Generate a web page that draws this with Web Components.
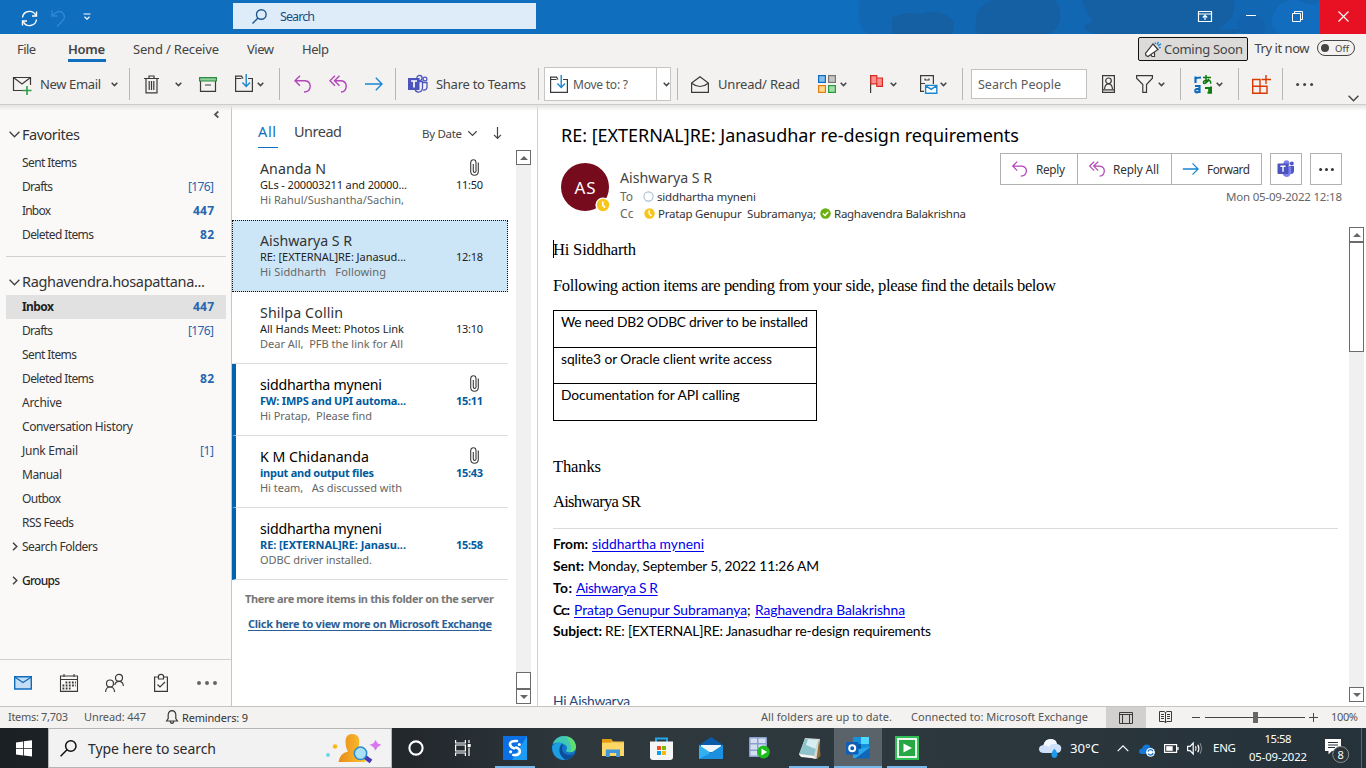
<!DOCTYPE html>
<html lang="en">
<head>
<meta charset="utf-8">
<title>Inbox - Outlook</title>
<style>
html,body{margin:0;height:100%;overflow:hidden}
body{font-family:"Noto Sans","Open Sans",sans-serif;color:#444}
</style>
</head>
<body>
<mail-app></mail-app>
<script>
/* Icon set: [width, height, svg body] */
const CH = 'stroke="#444" fill="none" stroke-width="1.5"';
const D = 'stroke="#3b3a39" fill="none" stroke-width="1.2"';
const W = 'stroke="#fff" fill="none" stroke-width="1.2"';
const P = 'stroke="#b146b8" fill="none" stroke-width="1.4"';
const B = 'stroke="#1b87d0" fill="none" stroke-width="1.4"';
const ICONS = {
 sync:[17,17,`<g stroke="#fff" fill="none" stroke-width="1.4"><path d="M1.5 7.5A7 7 0 0 1 14.8 5.5M15.5 9.5A7 7 0 0 1 2.2 11.5"/><path d="M15.5 1.5V6H11M1.5 15.5V11H6"/></g>`],
 undo:[15,17,`<g stroke="#2f86d6" fill="none" stroke-width="1.4"><path d="M1 .5V6H6.5M1 6L4 3.2Q8 0 11.5 2.8Q15.5 7 11.5 11L6 16.5"/></g>`],
 qat:[8,8,`<path d="M.5 1H7.5M1.5 3.8L4 6.2L6.5 3.8" ${W}/>`],
 search:[15,15,`<g stroke="#1c5a94" fill="none" stroke-width="1.4"><circle cx="9.3" cy="5.5" r="4.8"/><path d="M6 9L.5 14.5"/></g>`],
 ribbon:[14,11,`<path d="M.5 .5H13.5V10.5H.5ZM.5 3H13.5M7 9V4.5M4.8 6.5L7 4.4L9.2 6.5" ${W}/>`],
 min:[10,2,`<path d="M0 .5H10" stroke="#fff"/>`],
 restore:[11,11,`<path d="M.5 2.5H8.5V10.5H.5ZM2.5 2.5V.5H10.5V8.5H8.5" stroke="#fff" fill="none"/>`],
 close:[11,11,`<path d="M.5 .5L10.5 10.5M10.5 .5L.5 10.5" ${W}/>`],
 horn:[18,17,`<path d="M2 14.5L1.5 12.5L9 3L14 8.5L4 15.5L2 14.5ZM7 13.5L8 15.5H10.5V11.5" stroke="#3b3a39" stroke-width="1.2" fill="#fff"/><path d="M11 1.5L11.5 3M14.5 .8L13 3.5M17 2.8L14 4.7M16.8 6.5H14.8" ${B}/>`],
 chev:[7,5,`<path d="M.7 .8L3.5 3.6L6.3 .8" ${CH}/>`],
 chevL:[11,7,`<path d="M.6 .8L5.5 5.7L10.4 .8" stroke="#444" fill="none" stroke-width="1.4"/>`],
 newmail:[19,18,`<path d="M11 13.5H.5V.5H17.5V8" ${D}/><path d="M.8 .8L9 7L17.2 .8" ${D}/><path d="M14 9V18M9.5 13.5H18.5" stroke="#2f9e44" stroke-width="1.6"/>`],
 trash:[15,19,`<path d="M0 3.5H15M5 3.5V1H10V3.5M2 3.5V17.8H13V3.5M5.2 6V15M7.5 6V15M9.8 6V15" ${D}/>`],
 archive:[18,15,`<path d="M1.5 4V14.3H16.5V4M6 8H12" ${D}/><path d="M.6 .6H17.4V4H.6Z" fill="#8fd19e" stroke="#2b8a3e" stroke-width="1.2"/>`],
 folder:[18,18,`<path d="M6.5 4.5H.6V17.4H17.4V4.5H13M.6 4.5V2.2H6.5L8 4.5" ${D}/><path d="M11.2 0V12.5M7.4 8.6L11.2 12.5L15 8.6" ${B}/>`],
 reply:[17,18,`<path d="M6 .8L1 5.8L6 10.8M1 5.8H11Q16.2 6.3 16.2 11.3Q16 16.8 10 17" ${P}/>`],
 replyall:[18,18,`<path d="M6 .8L1 5.8L6 10.8M10.5 .8L5.5 5.8L10.5 10.8M5.5 5.8H12Q17.2 6.3 17.2 11.3Q17 16.8 12 17" ${P}/>`],
 fwd:[18,14,`<path d="M0 7H17M10.8 .8L17 7L10.8 13.2" ${B}/>`],
 teams:[20,18,`<circle cx="11.5" cy="3" r="2.6" fill="#e8e9f8" stroke="#4b53bc" stroke-width="1.3"/><circle cx="17" cy="4" r="1.9" fill="none" stroke="#4b53bc" stroke-width="1.2"/><path d="M8 6.5H14.5V13Q14 17.4 9.8 17Q7.5 16.5 7 14.5M14.5 7.5H19V12.5Q18.5 15.5 15 15" fill="none" stroke="#4b53bc" stroke-width="1.3"/><rect y="3" width="11.5" height="12" fill="#4b53bc"/><path d="M3 6H9M6 6V12.5" stroke="#fff" stroke-width="1.7"/>`],
 teamsc:[18,18,`<circle cx="9.5" cy="3.2" r="3" fill="#7b83eb"/><circle cx="14.8" cy="3.4" r="2" fill="#5059c9"/><path d="M12 6H17V11.5Q16.5 14.5 13 14Z" fill="#5059c9"/><path d="M6 6.5H14V12Q13.5 17 9.5 17Q6 16.5 5.5 13Z" fill="#7b83eb"/><rect x=".5" y="3.5" width="11" height="10.5" rx="1" fill="#4b53bc"/><path d="M3.4 6.3H8.6M6 6.3V11.8" stroke="#fff" stroke-width="1.4"/>`],
 openmail:[18,17,`<path d="M.6 7L9 .8L17.4 7V16.4H.6ZM.8 7.2Q9 13.8 17.2 7.2" ${D}/>`],
 cats:[18,18,`<g stroke-width="1.2"><rect x=".6" y=".6" width="6.8" height="6.8" fill="#83beec" stroke="#0f6cbd"/><rect x="10.6" y=".6" width="6.8" height="6.8" fill="#c8c6c4" stroke="#797775"/><rect x=".6" y="10.6" width="6.8" height="6.8" fill="#fcd98c" stroke="#e07c10"/><rect x="10.6" y="10.6" width="6.8" height="6.8" fill="#a1dda8" stroke="#2b9a3e"/></g>`],
 flag:[14,18,`<path d="M.6 0V18" stroke="#3b3a39" stroke-width="1.2"/><path d="M.8 .7H6.8V3H12.4V11.3H6.8V8.8H.8Z" fill="#ff8f8f" stroke="#d92b20" stroke-width="1.2"/><path d="M6.8 3V9" stroke="#d92b20"/>`],
 cabinet:[18,19,`<path d="M4 16.4H.6V.6H13.4V9M.6 8.5H5M5 3.5V5H9V3.5" ${D}/><path d="M5.6 10.4H16.8V18.2H5.6ZM5.8 10.8L11.2 14.4L16.5 10.8" stroke="#1b87d0" stroke-width="1.4" fill="#fff"/>`],
 person:[13,18,`<path d="M.6 .6H12.4V17.4H.6ZM.6 14.8H12.4" ${D}/><circle cx="6.5" cy="5.8" r="2.8" ${D}/><path d="M2.5 14Q3 8.8 6.5 8.8Q10 8.8 10.5 14" ${D}/>`],
 filter:[17,18,`<path d="M.6 .6H16.4V3.2L10.5 9.5V17.4H6.8V9.5L.6 3.2Z" ${D}/>`],
 translate:[19,19,`<g stroke="#0f6cbd" stroke-width="2.2" fill="none"><path d="M1.5 8V1.5M1.5 4Q2.5 2.5 7 2.5M1 11H5.5V18M5.5 14H2.5Q1 14.5 1.2 16Q1.5 17.6 3 17.4L5.5 16"/></g><g stroke="#107c10" stroke-width="1.5" fill="none"><path d="M9 2.6H17M12 0V8M15 4Q12 9 9.7 8.3Q8.6 6 12.5 4.9Q17.8 5 16.5 8.8"/><path d="M17 11.5V17.8H13.5M11 13H17M15.2 13V17" stroke-width="2"/></g>`],
 addin:[19,19,`<path d="M.7 4.5H8V18.3H.7ZM8 11.3H.7M8 11.3H15V18.3H8M14 0V9M9.5 4.5H19" fill="none" stroke="#d83b01" stroke-width="1.4"/>`],
 dots:[17,3,`<g fill="#444"><circle cx="1.6" cy="1.5" r="1.5"/><circle cx="8.6" cy="1.5" r="1.5"/><circle cx="15.6" cy="1.5" r="1.5"/></g>`],
 dotsS:[15,3,`<g fill="#333"><circle cx="1.6" cy="1.5" r="1.5"/><circle cx="7.5" cy="1.5" r="1.5"/><circle cx="13.4" cy="1.5" r="1.5"/></g>`],
 dotsN:[20,4,`<g fill="#666"><circle cx="2" cy="2" r="2"/><circle cx="10" cy="2" r="2"/><circle cx="18" cy="2" r="2"/></g>`],
 left:[5,7,`<path d="M4.3 .5L1 3.5L4.3 6.5" stroke="#555" stroke-width="1.8" fill="none"/>`],
 right:[6,9,`<path d="M1 .7L4.8 4.5L1 8.3" ${CH}/>`],
 down:[9,12,`<path d="M4.5 0V11M1 7.8L4.5 11.3L8 7.8" stroke="#444" fill="none" stroke-width="1.2"/>`],
 clip:[9,17,`<path d="M8.3 3.5V12.5Q8 16.3 4.5 16.3Q1 16.3 .7 12.5V3.5Q1 .7 3.4 .7Q6 .7 6 3.5V12Q5.9 13.4 4.6 13.4Q3.3 13.4 3.3 12V5" stroke="#3b3a39" fill="none" stroke-width="1.1"/>`],
 nmail:[18,14,`<path d="M.7 .7H17.3V13H.7Z" fill="#c3ddf5" stroke="#0f6cbd" stroke-width="1.4"/><path d="M1 1.2L9 6.5L17 1.2" fill="none" stroke="#0f6cbd" stroke-width="1.2"/>`],
 ncal:[18,18,`<path d="M.5 2H17.5V17.4H.5ZM.5 5.5H17.5M4 0V3M14 0V3" stroke="#3b3a39" fill="none" stroke-width="1.1"/><g stroke="#3b3a39" stroke-width="1.8" stroke-dasharray="1.8 1.4"><path d="M5.5 8.5H16M2.5 11.5H16M2.5 14.5H10.5"/></g>`],
 npeople:[19,18,`<g ${D}><circle cx="5" cy="9.5" r="3.5"/><circle cx="14" cy="3.8" r="3.5"/><path d="M.6 18Q.8 13 5 13Q9.3 13 9.6 18M9.8 11Q10.5 7.4 14 7.4Q18 7.4 18.4 12"/></g>`],
 nclip:[14,18,`<path d="M.6 3H4.5V1.5Q7 -.8 9.5 1.5V3H13.4V17.4H.6ZM4.5 3V5H9.5V3M3.5 10.5L6 13L11 8" ${D}/>`],
 bell:[12,14,`<path d="M.6 11H11.4L9.8 8.5V4.5Q9.3 .7 6 .6Q2.7 .7 2.2 4.5V8.5ZM4.3 11.3Q4.6 13.3 6 13.3Q7.4 13.3 7.7 11.3" ${D}/>`],
 view:[14,12,`<path d="M.5 .5H13.5V11.5H.5ZM.5 2.5H13.5M3.5 2.5V11.5M10.5 2.5V11.5" stroke="#3b3a39" fill="none"/>`],
 book:[13,12,`<path d="M6.5 1.5V12M.5 .5H5L6.5 1.5L8 .5H12.5V10.5H8L6.5 11.5L5 10.5H.5ZM2 3.5H5M2 5.5H5M2 7.5H5M8 3.5H11M8 5.5H11M8 7.5H11" stroke="#3b3a39" fill="none"/>`],
 win:[17,17,`<path d="M0 2.4L7.2 1.4V8H0ZM8 1.3L16 .2V8H8ZM0 8.8H7.2V15.5L0 14.5ZM8 8.8H16V16.6L8 15.6Z" fill="#fff"/>`],
 tsearch:[17,17,`<g stroke="#111" fill="none" stroke-width="1.5"><circle cx="10.8" cy="6" r="5.2"/><path d="M7 9.7L.6 16.2"/></g>`],
 promo:[54,30,`<defs><linearGradient id="g"><stop offset="0" stop-color="#e88a1c"/><stop offset="1" stop-color="#fdc52f"/></linearGradient></defs><circle cx="9" cy="13.5" r="2.2" fill="#fdb714"/><circle cx="2" cy="22" r="2" fill="#6cd7ea"/><path d="M12.5 29Q14 20 22 18.5Q19.5 15 19.5 8Q19.8 1 26 1Q33 1 33.3 8Q33.3 15 30.5 18Q38 20 39.5 29Z" fill="url(#g)"/><path d="M49.5 8.5L51 11L53.5 12L51 13.5L49.5 16L48 13.5L45.5 12L48 11Z" fill="#d977f2" stroke="#d977f2" stroke-width="1.6"/><path d="M39 24L45 28.5" stroke="#4438bb" stroke-width="4.5"/><circle cx="34.5" cy="20.3" r="6.2" fill="#a9e2f7" stroke="#2e8bd0" stroke-width="1.5"/>`],
 cortana:[16,16,`<circle cx="8" cy="8" r="6.6" fill="none" stroke="#fff" stroke-width="2.1"/>`],
 tview:[17,16,`<path d="M.6 0V3H10.4V0M.6 16V13H10.4V16M.6 5H10.4V11H.6ZM14 0V3M14 7.5V16" ${W}/><rect x="12.7" y="4" width="3" height="3" fill="#fff"/>`],
 sapp:[24,24,`<rect width="24" height="24" fill="#0b6fe4"/><path d="M24 0V24H9Z" fill="#1c9cf2"/><path d="M14 5Q7 4.5 7 8.3Q7.3 11 11 12.3M13 11.5Q17.3 13 16.8 16Q16.2 19.5 10.3 19" fill="none" stroke="#fff" stroke-width="2.6" stroke-linecap="round"/><circle cx="16.3" cy="8.5" r="1.6" fill="#fff"/><circle cx="7.6" cy="15.8" r="1.6" fill="#fff"/>`],
 edge:[24,24,`<circle cx="12" cy="12" r="12" fill="#1274c9"/><path d="M.8 8Q4 0 12 0Q22.5 .5 24 10Q24 16 18 16.3Q14 16.3 14 14.5Q16 12 14 9.5Q8 4.5 .8 8Z" fill="#3fc9b4"/><path d="M14 0.2Q23 2 24 11Q23.5 16 18 16.3Q22 11 14 .2Z" fill="#62dd70"/><path d="M.3 10Q4 5.5 10 7Q6 11 8.5 16Q12 21 20.5 19.5Q16 25 9 23.6Q-.5 20.5 .3 10Z" fill="#1b9de2"/><path d="M10 8Q3.5 16 13 23.8Q19 23.5 22 18Q17 20 13 18Q8 14 11 9Z" fill="#0c4d98"/>`],
 explorer:[22,18,`<path d="M0 0H9L11 2.5H22V17H0Z" fill="#f9c74a"/><path d="M0 0H9L10.5 2.3L9 3.5H0Z" fill="#e39b12"/><path d="M0 4H22V17H0Z" fill="#ffd766"/><path d="M3.8 18V10.5H18V18H14.2V14H7.8V18Z" fill="#3f97dc"/>`],
 store:[23,23,`<path d="M6 6V1.5H17V6" stroke="#24a8ec" stroke-width="2" fill="none"/><path d="M0 4.5H23V20Q23 23 20 23H3Q0 23 0 20Z" fill="#f6f6f6"/><path d="M7 9H11V13H7Z" fill="#f25022"/><path d="M12 9H16V13H12Z" fill="#7fba00"/><path d="M7 14H11V18H7Z" fill="#00a4ef"/><path d="M12 14H16V18H12Z" fill="#ffb900"/>`],
 mailapp:[24,22,`<path d="M0 8L12 0L24 8V12H0Z" fill="#0a5ba8"/><path d="M2 8H22V15H2Z" fill="#eef5fb"/><path d="M0 8L12 16L24 8V22H0Z" fill="#31b1f3"/><path d="M0 22L14 14.6L24 8V22Z" fill="#1c90e0"/>`],
 server:[21,22,`<rect width="18" height="20" rx="1" fill="#8ba0cf"/><path d="M1.5 1.5H8V6H1.5ZM9.5 1.5H16.5V6H9.5ZM1.5 7.5H8V12.5H1.5ZM9.5 7.5H16.5V12.5H9.5ZM1.5 14H8V18.5H1.5Z" fill="#d5dff2"/><circle cx="14.5" cy="15" r="6.4" fill="#1dbd1d"/><path d="M12.5 11.6L18.2 15L12.5 18.4Z" fill="#fff"/>`],
 notepad:[23,23,`<path d="M7 1L22 2L20 21L18 22L1 18Z" fill="#d9d9d2"/><path d="M7 2L20 3L16 19L1 17Z" fill="#8fc3cc"/><path d="M10 2L20 3L17.5 12L8 8Z" fill="#d6eef2"/><path d="M1 17L16 19L17.5 21.5L3 20Z" fill="#f4f4f0"/><path d="M21 3L22.5 19L18.5 22Z" fill="#8d6d33"/>`],
 outlook:[24,22,`<rect x="7" width="16" height="13" fill="#1490df"/><rect x="15" width="8" height="7" fill="#50d9ff"/><rect x="7" y="7" width="8" height="7" fill="#0358a7"/><path d="M7 21V13L24 10V21Z" fill="#28a8ea"/><path d="M24 10.5L9 21.5H24Z" fill="#1066b8"/><rect y="5" width="12.5" height="12.5" rx="1" fill="#0f5fb8"/><circle cx="6.2" cy="11.2" r="3" fill="none" stroke="#fff" stroke-width="2"/>`],
 play:[24,24,`<rect width="24" height="24" fill="#2fbf55"/><rect x="3" y="3" width="18" height="18" fill="#28a745" stroke="#fff" stroke-width="1.8"/><path d="M8.5 7.5L17 12L8.5 16.5Z" fill="#fff"/>`],
 weather:[23,21,`<path d="M5 15Q0 15 0 11Q0 7.5 4.5 7Q6 .8 12 1Q17 1.2 18 6Q22.3 6.5 22.3 10.5Q22 15 17 15Z" fill="#cfe0fa"/><path d="M4.5 7Q6 .8 12 1Q17 1.2 18 6Q12 5 10 9Q7 7 4.5 7Z" fill="#f4f8ff"/><path d="M15.3 10.5Q19 14.5 18.4 17.5Q17.5 20 15 20Q12.5 19.5 12.3 17Q12.5 14 15.3 10.5Z" fill="#1e9be6"/>`],
 up:[12,7,`<path d="M.7 6.2L6 .9L11.3 6.2" ${W}/>`],
 onedrive:[17,13,`<path d="M3 10Q0 10 0 7.3Q.3 4.8 3 4.5Q4.3 .3 8 .5Q11 .8 11.8 3.8Q14.5 4 14.5 7V10Z" fill="#1478d4"/><circle cx="11.5" cy="8.3" r="4.4" fill="#fff"/><path d="M9 7.5A2.7 2.7 0 0 1 14 7.2M14.2 9A2.7 2.7 0 0 1 9.2 9.6" stroke="#1478d4" stroke-width="1.3" fill="none"/>`],
 battery:[15,9,`<path d="M.6 .6H12.6V8.4H.6ZM14 3V6" ${W}/><rect x="2.2" y="2.2" width="6.5" height="4.6" fill="#fff"/>`],
 speaker:[17,13,`<path d="M.6 4.3H3L6.2 1V12L3 8.7H.6ZM8.5 4.3Q9.7 6.5 8.5 8.7M10.8 2.7Q12.8 6.5 10.8 10.3" ${W}/><path d="M13.2 1.2Q16.2 6.5 13.2 11.8" stroke="#87919a" fill="none"/>`],
 notif:[25,24,`<path d="M0 0H16V12H7L3.5 15.3V12H0Z" fill="#fff"/><path d="M3 3.5H13M3 6H13M3 8.5H10" stroke="#26323a"/><circle cx="15.7" cy="15.5" r="8" fill="#2d3438" stroke="#8a9195" stroke-width="1"/>`],
 clock:[11,11,`<circle cx="5.5" cy="5.5" r="5.2" fill="#f8c51c"/><path d="M5.2 2.2V5.8L7.5 8" stroke="#fff" stroke-width="1.5" fill="none"/>`],
 clockB:[16,16,`<circle cx="8" cy="8" r="7.6" fill="#fff"/><circle cx="8" cy="8" r="6.2" fill="#f8c51c"/><path d="M7.8 4.5V8.4L10.2 10.6" stroke="#fff" stroke-width="1.6" fill="none"/>`],
 ring:[11,11,`<circle cx="5.5" cy="5.5" r="4.6" fill="#fff" stroke="#a6c1d4" stroke-width="1.1"/>`],
 check:[11,11,`<circle cx="5.5" cy="5.5" r="5.2" fill="#6bb00f"/><path d="M3 5.5L5 7.5L8.2 4" stroke="#fff" stroke-width="1.5" fill="none"/>`],
 blobs:[506,34,`<path d="M0 0H506V34H8Q-6 24 0 0Z" fill="#1267b3"/><g fill="#155fa3"><path d="M32 18Q48 10 60 14Q74 9 86 15Q98 20 92 34H32Z"/><path d="M116 22Q114 8 132 0H194Q202 8 200 20Q198 30 188 34H118Q114 28 116 22Z"/><path d="M222 0H374Q376 18 362 26Q352 31 380 29Q384 34 360 34H240Q224 32 224 26L233 21Q224 10 222 0Z"/><path d="M380 18Q390 10 402 18Q408 26 402 34H384Q374 26 380 18Z" fill="#1262ad"/></g><path d="M418 6Q430 -4 442 2Q456 8 460 0V34H420Q404 26 418 6Z" fill="#126dbf"/>`],
};

const define = (name, css, html, after) => customElements.define(name, class extends HTMLElement {
  connectedCallback() {
    if (this.shadowRoot) return;
    const root = this.attachShadow({ mode: 'open' });
    root.innerHTML = `<style>*{box-sizing:border-box}${css}</style>` + (typeof html === 'function' ? html(this) : html);
    if (after) after(this, root);
  }
});

/* A single line of text set to a given measure. */
define('fit-text', `:host{display:block;flex:none;white-space:pre}span{display:inline-block;text-decoration:inherit;text-underline-offset:2px}`, '<span><slot></slot></span>', (el, root) => {
  el.style.fontSize = el.getAttribute('s') + 'px';
  const span = root.querySelector('span'), w = +el.getAttribute('w');
  if (!w) return;
  const n = el.textContent.length, now = span.getBoundingClientRect().width;
  el.style.letterSpacing = ((w - now) / Math.max(1, n - 1)).toFixed(3) + 'px';
  el.style.width = w + 'px';
});
define('ui-icon', `:host{display:block;flex:none;line-height:0}svg{display:block;overflow:visible}`, el => {
  const [w, h, body] = ICONS[el.getAttribute('name')];
  return `<svg width="${w}" height="${h}" viewBox="0 0 ${w} ${h}">${body}</svg>`;
});

const T = (text, s, w, style = '') => `<fit-text s="${s}" w="${w}" style="${style}">${text}</fit-text>`;
const I = (name, style = '') => `<ui-icon name="${name}" style="${style}"></ui-icon>`;
/* A bar of cells; every cell reaches to the start of the next one. */
const row = (cells, from = 0, cls = 'row') => {
  let out = `<div class="${cls}"><div class="cell" style="width:${cells[0][0] - from}px"></div>`;
  cells.forEach(([x, html], i) => {
    const next = cells[i + 1];
    out += `<div class="cell" style="${next ? `width:${next[0] - x}px` : ''}">${html}</div>`;
  });
  return out + '</div>';
};
const ROW = `.row{display:flex;align-items:stretch;height:100%}.cell{flex:none;display:flex;align-items:center}`;

define('title-bar', `:host{display:block;height:34px;background:#106ebe;position:relative;overflow:hidden}${ROW}
.art{position:absolute;left:860px;top:0}.row{position:relative}
.search{width:303px;height:26px;background:#deebf8;display:flex;align-items:center;margin-top:-2px;padding-left:19px;color:#174f84;gap:13px}
.close{width:46px;height:34px;background:#e81123;display:grid;place-items:center}.close ui-icon{margin-top:-2px}`,
 `<div class="art">${I('blobs')}</div>` + row([[20.5, I('sync', 'margin-top:3px')], [51, I('undo', 'margin-top:2px')], [83, I('qat')],
  [233, `<div class="search">${I('search')}${T('Search', 12.5, 35)}</div>`], [1198, I('ribbon', 'margin-top:-2px')], [1246, I('min', 'margin-top:-2px')], [1292, I('restore', 'margin-top:-1px')],
  [1320, `<div class="close">${I('close')}</div>`]]));

define('ribbon-tabs', `:host{display:block;height:32px;color:#444}${ROW}
.cell>fit-text{margin-top:-2px}
.on{height:28px;border-bottom:3px solid #106ebe;align-self:flex-start;padding-top:6px;width:38px;line-height:19px}
.soon{width:110px;height:24px;border:1px solid #111;border-radius:2px;background:#dddbda;display:flex;align-items:center;padding-left:5px;gap:2px;margin-top:-2px}
.toggle{width:38px;height:16px;border:1.4px solid #444;border-radius:9px;display:flex;align-items:center;margin-top:-4px;padding-left:3px;gap:6px;color:#444}.toggle i{width:8px;height:8px;border-radius:50%;background:#444}`,
 row([[17, T('File', 13, 19)], [68, `<div class="on">${T('Home', 13, 37, 'font-weight:600')}</div>`], [133, T('Send / Receive', 13, 86)], [247, T('View', 13, 27)], [302, T('Help', 13, 27)],
  [1138, `<div class="soon">${I('horn')}${T('Coming Soon', 13, 79)}</div>`], [1254.5, T('Try it now', 13, 55, 'margin-top:-4px')], [1317, `<div class="toggle"><i></i>${T('Off', 9.5, 14)}</div>`]]));

const sep = '<div class="sep"></div>', c = I('chev');
define('ribbon-bar', `:host{display:block;height:39px;border-bottom:1px solid #cfcdcb;color:#444}${ROW}.row{height:36px}
.sep{width:1px;height:32px;background:#b8b6b4}
.move{width:127px;height:34px;background:#fff;border:1px solid #c8c6c4;display:flex;align-items:center}.move fit-text{margin:0 28px 0 5px;color:#555}.move ui-icon:first-child{margin-left:5px}
.drop{height:32px;width:14px;border-left:1px solid #c8c6c4;display:grid;place-items:center}
.people{width:116px;height:30px;background:#fff;border:1px solid #c3c1bf;display:flex;align-items:center;padding-left:6px;color:#5a5a5a}`,
 row([[13, I('newmail', 'margin-top:4px')], [40, T('New Email', 13, 61)], [111, c], [129, sep], [144, I('trash')], [175, c], [199, I('archive')], [235, I('folder', 'margin-top:-2px')], [257, c], [279, sep],
  [294, I('reply')], [329, I('replyall')], [365, I('fwd')], [395, sep], [408, I('teams')], [436, T('Share to Teams', 13, 90)], [538, sep],
  [544, `<div class="move">${I('folder')}${T('Move to: ?', 12, 55)}<div class="drop">${c}</div></div>`], [677, sep], [691, I('openmail')], [718, T('Unread/ Read', 13, 82)],
  [818, I('cats')], [840, c], [870, I('flag')], [890, c], [920, I('cabinet')], [940, c], [962, sep], [971, `<div class="people">${T('Search People', 12.5, 83)}</div>`],
  [1102, I('person')], [1136, I('filter')], [1158, c], [1180, sep], [1194, I('translate')], [1216, c], [1238, sep], [1252, I('addin')], [1282, sep], [1296, I('dots')], [1348, I('chevL', 'margin-top:28px')]]));

const folder = (name, w, n = '', nw = 0, cls = '') => `<div class="f ${cls}">${T(name, 12, w)}${n ? T(n, 12, nw, 'margin-left:auto;color:#2566ae;font-weight:' + (n[0] === '[' ? 400 : 700)) : ''}</div>`;
define('folder-pane', `:host{display:flex;flex-direction:column;width:232px;background:#faf9f8;border-right:1px solid #c8c6c4;color:#333}
.collapse,.h,.f,.s,.line,.gap{flex:none}
.collapse{height:16px;padding:6px 0 0 214px}.h{display:flex;align-items:center;gap:2px;height:26px;padding-left:9px}
.f{height:24px;display:flex;align-items:center;margin:0 5px 0 6px;padding:0 12px 0 16px}.sel{background:#e1e1e1;font-weight:700;color:#222}
.tree fit-text{margin-top:-2px}
.line{height:1px;background:#d0d0d0;margin:10px 5px 12px 6px}.s{display:flex;align-items:center;gap:4px;height:24px;padding-left:12px}
${ROW}.row.nav{margin-top:auto;height:47px;border-top:1px solid #d2d0ce;flex:none}`,
 `<div class="collapse">${I('left')}</div><div class="h">${I('chevL')}${T('Favorites', 14.5, 58)}</div><div class="gap" style="height:3px"></div>` +
 folder('Sent Items', 55) + folder('Drafts', 31, '[176]', 26) + folder('Inbox', 29, '447', 21) + folder('Deleted Items', 72, '82', 14) +
 `<div class="line"></div><div class="tree"><div class="h">${I('chevL')}${T('Raghavendra.hosapattana...', 14.5, 183)}</div>` +
 folder('Inbox', 32, '447', 21, 'sel') + folder('Drafts', 31, '[176]', 26) + folder('Sent Items', 55) + folder('Deleted Items', 72, '82', 14) + folder('Archive', 40) +
 folder('Conversation History', 111) + folder('Junk Email', 56, '[1]', 14) + folder('Manual', 40) + folder('Outbox', 39) + folder('RSS Feeds', 52) +
 `<div class="s">${I('right', 'margin-top:-2px')}${T('Search Folders', 12, 76)}</div><div class="gap" style="height:10px"></div><div class="s" style="color:#222">${I('right', 'margin-top:-2px')}${T('Groups', 12, 38, 'font-weight:500')}</div></div>` +
 row([[14, I('nmail')], [60, I('ncal')], [105, I('npeople')], [154, I('nclip')], [197, I('dotsN')]], 0, 'row nav'));

define('scroll-bar', `:host{display:flex;flex-direction:column;width:15px;background:#f0f0f0}
b{height:15px;border:1.4px solid #6b6b6b;background:#fff;display:grid;place-items:center}
b::before{content:"";border:4px solid transparent;border-top-width:0;border-bottom:4px solid #666}
b:last-child::before{border-top:4px solid #666;border-bottom-width:0}
i{border:1.4px solid #6b6b6b;background:#fff}`,
 el => `<b></b><div style="height:${el.getAttribute('before')}px"></div><i style="height:${el.getAttribute('thumb')}px"></i><div style="flex:1"></div><b></b>`);

define('mail-item', `:host{display:block;height:72px;width:276px;border-bottom:1px solid #dcdcdc;padding:11px 25px 0 28px;color:#222;box-sizing:border-box}
:host([unread]){border-left:4px solid #0063b1;padding-left:24px}:host([unread]) .a{color:#000}:host([unread]) .b{color:#005a9e;font-weight:700}
:host([selected]){background:#cde6f7;outline:1px dotted #111;outline-offset:-1px}:host([first]){border-color:transparent}
div{display:flex;justify-content:space-between;align-items:center}.a{height:18px;color:#333}.b{height:15px}.c{height:15px;color:#666}`,
 el => { const g = k => el.getAttribute(k); return `<div class="a">${T(g('name'), 14.2, g('w1'))}${el.hasAttribute('clip') ? I('clip', 'margin-right:4px;margin-top:-1px') : ''}</div>
 <div class="b">${T(g('subject'), 11, g('w2'))}${T(g('time'), 11, 27)}</div><div class="c">${T(g('preview'), 11, g('w3'))}</div>`; });
const M = (name, w1, subject, w2, preview, w3, time, flags = '') => `<mail-item name="${name}" w1="${w1}" subject="${subject}" w2="${w2}" preview="${preview}" w3="${w3}" time="${time}" ${flags}></mail-item>`;
define('message-list', `:host{display:flex;width:306px;background:#fff;border-right:1px solid #d0d0d0}
.main{width:284px;flex:none;overflow:hidden}${ROW}.row.head{height:43px}.on{border-bottom:1px solid #106ebe;width:20px;height:27px;color:#106ebe;align-self:flex-start;margin-top:16px;line-height:20px}
scroll-bar{margin:45px 0 2px}.more{color:#777;font-weight:700;height:40px;display:flex;align-items:center;padding-left:13px}.more fit-text{margin-top:-4px}.link{color:#2b5f96;font-weight:700;padding-left:16px;line-height:12px;margin-top:-2px}`,
 `<div class="main">${row([[258, `<div class="on">${T('All', 14.5, 18)}</div>`], [294, T('Unread', 14.5, 48, 'margin-top:9px')], [422, T('By Date', 11.5, 40, 'margin-top:13px')], [467, I('chevL', 'margin-top:13px;transform:scale(.85)')], [493, I('down', 'margin-top:12px')]], 232, 'row head')}` +
 M('Ananda N', 66, 'GLs - 200003211 and 20000...', 147, 'Hi Rahul/Sushantha/Sachin,', 144, '11:50', 'clip first') +
 M('Aishwarya S R', 92, 'RE: [EXTERNAL]RE: Janasud...', 146, 'Hi Siddharth   Following', 126, '12:18', 'selected') +
 M('Shilpa Collin', 83, 'All Hands Meet: Photos Link', 144, 'Dear All,  PFB the link for All', 143, '13:10') +
 M('siddhartha myneni', 122, 'FW: IMPS and UPI automa...', 146, 'Hi Pratap,  Please find', 112, '15:11', 'clip unread') +
 M('K M Chidananda', 109, 'input and output files', 114, 'Hi team,   As discussed with', 142, '15:43', 'clip unread') +
 M('siddhartha myneni', 122, 'RE: [EXTERNAL]RE: Janasu...', 146, 'ODBC driver installed.', 112, '15:58', 'unread') +
 `<div class="more">${T('There are more items in this folder on the server', 11, 249)}</div><div class="link">${T('Click here to view more on Microsoft Exchange', 11, 244, 'text-decoration:underline')}</div></div><scroll-bar before="507" thumb="17"></scroll-bar>`);

const S = (t, w) => T(t, 16.6, w, 'font-family:Liberation Serif,serif;color:#000;margin-top:2px');
const L = (t, w, st = '') => T(t, 13.8, w, 'font-family:Lato,sans-serif;' + st);
const A = 'color:#0000ee;text-decoration:underline;', BD = 'font-weight:700;';
define('reading-pane', `:host{display:block;flex:1;background:#fff;color:#000;overflow:hidden}${ROW}
h1{margin:0;font-weight:400;padding:17px 0 0 23px;height:48px;line-height:26px}
.head{display:flex;height:68px;padding-left:23px}
.av{width:48px;height:48px;border-radius:50%;background:#750b1c;color:#fff;display:grid;place-items:center;position:relative;margin-top:10px;flex:none}.av ui-icon{position:absolute;left:34px;top:34px}
.who{width:380px;padding-top:14px;margin-left:11px;color:#444}.who .n{height:21px;line-height:21px}.who .r{height:17px}.who .row{color:#333}
.act{margin-left:auto;padding-right:24px}.btns{display:flex;height:32px;gap:8px;justify-content:flex-end}.g{border:1px solid #b3b0ad;display:flex}.g div{display:flex;align-items:center;padding-left:10px;gap:9px;color:#333}.g div+div{border-left:1px solid #b3b0ad}
.g.one{width:32px;align-items:center;justify-content:center}.date{display:flex;justify-content:flex-end;color:#666;height:23px;align-items:center}
.g:not(.one) ui-icon{width:16px}
.body{display:flex;height:480px;overflow:hidden}.doc{width:800px;flex:none;padding-left:15px;height:480px;overflow:hidden}.p{display:flex;align-items:center}
.caret{width:1px;height:18px;background:#000;margin-right:-1px}
table{border-collapse:collapse;width:264px}td{border:1px solid #000;height:36.7px;vertical-align:top;padding:2px 7px 0;line-height:18px}
hr{border:0;height:1px;background:#dcdcdc;margin:0}scroll-bar{margin:2px 0 3px 11px}.m{height:22px}`,
 `<h1>${T('RE: [EXTERNAL]RE: Janasudhar re-design requirements', 18, 458)}</h1>
 <div class="head"><div class="av">${T('AS', 17, 21)}${I('clockB')}</div>
 <div class="who"><div class="n">${T('Aishwarya S R', 14.2, 92)}</div>
 <div class="r">${row([[620, T('To', 12, 13, 'color:#666')], [642.5, I('ring')], [657, T('siddhartha myneni', 11.5, 99)]], 620)}</div>
 <div class="r">${row([[620, T('Cc', 12, 13.5, 'color:#666')], [643.5, I('clock')], [658, T('Pratap Genupur  Subramanya;', 11.5, 158)], [820, I('check')], [834, T('Raghavendra Balakrishna', 11.5, 132)]], 620)}</div></div>
 <div class="act"><div class="btns"><div class="g"><div style="width:76px">${I('reply', 'transform:scale(.9)')}${T('Reply', 11.8, 29)}</div><div style="width:94px">${I('replyall', 'transform:scale(.9)')}${T('Reply All', 11.8, 46)}</div><div style="width:90px">${I('fwd', 'transform:scale(.9)')}${T('Forward', 11.8, 43)}</div></div>
 <div class="g one">${I('teamsc')}</div><div class="g one">${I('dotsS')}</div></div><div class="date">${T('Mon 05-09-2022 12:18', 11.5, 116)}</div></div></div>
 <div style="height:4px"></div><div class="body"><div class="doc">
 <div class="p" style="height:48px"><i class="caret"></i>${S('Hi Siddharth', 83)}</div><div class="p" style="height:24px">${S('Following action items are pending from your side, please find the details below', 503)}</div>
 <div style="height:13px"></div><table><tr><td>${L('We need DB2 ODBC driver to be installed', 247)}</td></tr><tr><td>${L('sqlite3 or Oracle client write access', 211)}</td></tr><tr><td>${L('Documentation for API calling', 179)}</td></tr></table>
 <div class="p" style="height:24px;margin-top:33px">${S('Thanks', 48)}</div><div class="p" style="height:24px;margin-top:11px">${S('Aishwarya SR', 88)}</div><div style="height:15px"></div><hr>
 <div style="height:3px"></div>
 <div class="m">${row([[553, L('From:', 35, BD)], [592, L('siddhartha myneni', 112, A)]], 553)}</div>
 <div class="m">${row([[553, L('Sent:', 31, BD)], [588, L('Monday, September 5, 2022 11:26 AM', 231)]], 553)}</div>
 <div class="m">${row([[553, L('To:', 19, BD)], [576, L('Aishwarya S R', 82, A)]], 553)}</div>
 <div class="m">${row([[553, L('Cc:', 17, BD)], [574, L('Pratap Genupur Subramanya', 173, A)], [747, L(';', 0)], [755, L('Raghavendra Balakrishna', 150, A)]], 553)}</div>
 <div class="m" style="height:20px">${row([[553, L('Subject:', 49, BD)], [605, L('RE: [EXTERNAL]RE: Janasudhar re-design requirements', 326)]], 553)}</div>
 <div class="m" style="margin-top:52px">${L('Hi Aishwarya', 77, 'color:#1f497d')}</div>
 </div><scroll-bar before="0" thumb="110"></scroll-bar></div>`);

define('status-bar', `:host{display:block;box-sizing:border-box;height:22px;background:#f3f2f1;border-top:1px solid #c6c4c2;color:#555}${ROW}
.cell>fit-text{margin-top:-2px}
.v{width:40px;height:21px;background:#d2d0ce;display:grid;place-items:center}.tr{width:100px;height:11px;background:linear-gradient(#444,#444) 0 5px/100% 1px no-repeat;display:flex;justify-content:center}.tr i{width:5px;height:11px;background:#666}`,
 row([[8, T('Items: 7,703', 11, 60)], [84, T('Unread: 447', 11, 62)], [166, I('bell', 'margin-top:-1px')], [182, T('Reminders: 9', 11, 66, 'color:#333;margin-top:0')], [761, T('All folders are up to date.', 11, 131)], [911, T('Connected to: Microsoft Exchange', 11, 177)],
  [1106, `<div class="v">${I('view')}</div>`], [1159, I('book', 'margin-top:-2px')], [1192, '<div style="width:8px;height:1px;background:#444"></div>'], [1205, '<div class="tr"><i></i></div>'],
  [1309, '<svg width="9" height="9"><path d="M0 4.5H9M4.5 0V9" stroke="#444"/></svg>'], [1331, T('100%', 11, 27)]]));

define('task-bar', `:host{display:block;height:40px;background:linear-gradient(90deg,#1b2024 0,#22282c 30%,#2e383d 42%,#2d383e 62%,#26323a 100%);color:#fff}${ROW}
.q{width:344px;height:40px;background:#f2f2f2;border:1px solid #b5b5b5;display:flex;align-items:center;padding-left:11px;color:#2b2b2b}
.app{height:40px;display:flex;align-items:center;justify-content:center;border-bottom:2px solid #76b9ed;width:40px;padding-top:2px}.hot{width:48px;background:#596369}
.dt{display:flex;flex-direction:column;align-items:center;width:58px;line-height:18px}.n{position:relative;margin-top:6px}.n fit-text{position:absolute;left:12.5px;top:8px}`,
 row([[15.5, I('win')], [48, `<div class="q">${I('tsearch')}${T('Type here to search', 14, 128, 'margin:0 110px 0 11px')}${I('promo')}</div>`], [408, I('cortana')], [455, I('tview')],
  [495, `<div class="app">${I('sapp')}</div>`], [552, I('edge')], [602, I('explorer')], [650, I('store')], [699, I('mailapp')], [749, I('server')],
  [789, `<div class="app">${I('notepad')}</div>`], [834, `<div class="app hot">${I('outlook')}</div>`], [887, `<div class="app">${I('play')}</div>`],
  [1039, I('weather')], [1070, T('30°C', 13.2, 29)], [1117, I('up')], [1139, I('onedrive', 'margin-top:4px')], [1164, I('battery')], [1187, I('speaker')], [1213, T('ENG', 11.5, 23, 'margin-top:-1px')],
  [1249, `<div class="dt">${T('15:58', 11.3, 27)}${T('05-09-2022', 11.3, 58)}</div>`], [1325, `<div class="n">${I('notif')}${T('8', 11, 0)}</div>`], [1361, '<div style="width:1px;height:40px;background:#5d676d"></div>']]));

define('mail-app', `:host{display:flex;flex-direction:column;width:1366px;height:768px;overflow:hidden;line-height:normal}
.rib{background:#f3f2f1}.main{flex:1;display:flex;min-height:0;position:relative}.shade{position:absolute;left:0;right:0;top:0;height:6px;background:linear-gradient(#e4e3e2,#f5f4f400);z-index:1}`,
 `<title-bar></title-bar><div class="rib"><ribbon-tabs></ribbon-tabs><ribbon-bar></ribbon-bar></div>
 <div class="main"><div class="shade"></div><folder-pane></folder-pane><message-list></message-list><reading-pane></reading-pane></div>
 <status-bar></status-bar><task-bar></task-bar>`);
</script>
</body>
</html>
